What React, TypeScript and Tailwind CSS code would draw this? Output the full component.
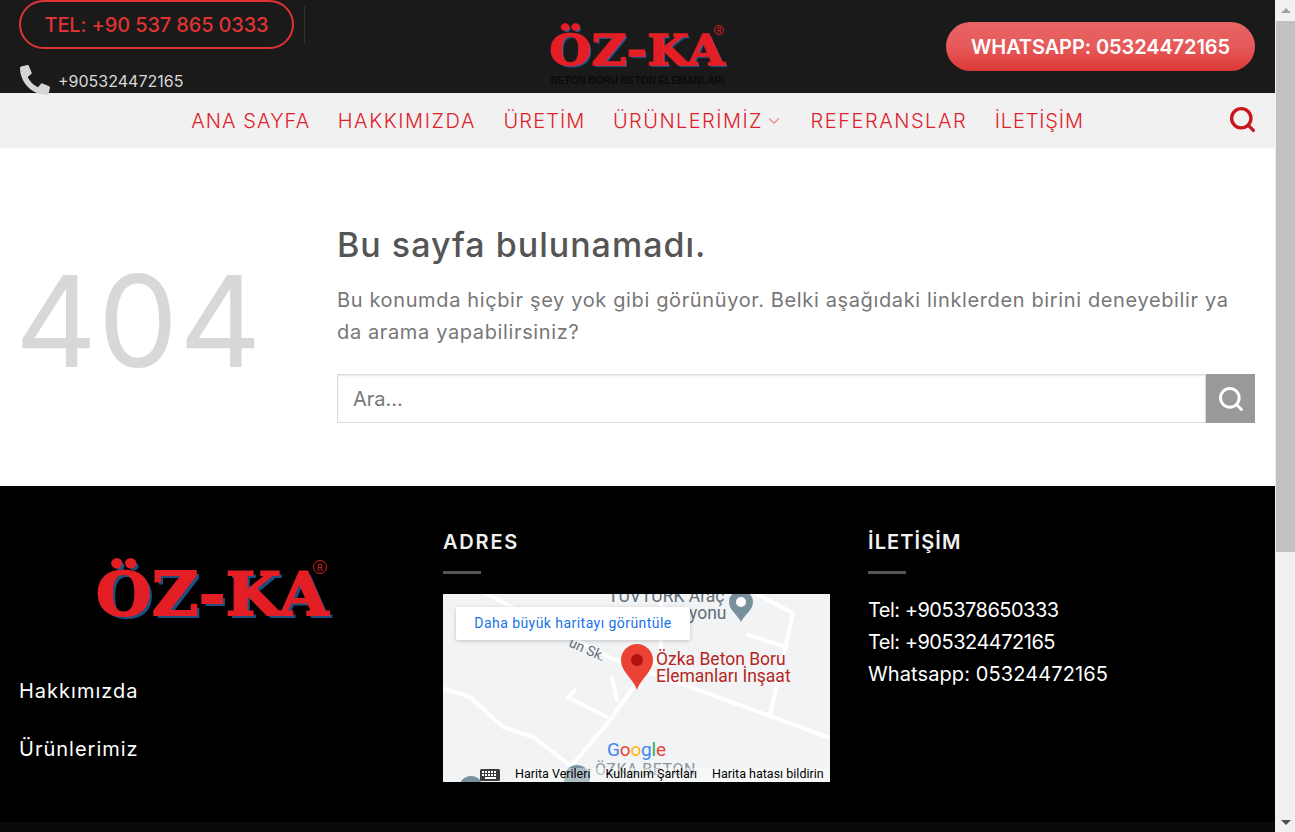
import { ChevronDown, Search } from 'lucide-react'
import { FaPhoneAlt } from 'react-icons/fa'

const navItems = [
  { label: 'ANA SAYFA', tracking: 'tracking-[1.1px]' },
  { label: 'HAKKIMIZDA', tracking: 'tracking-[1.6px]' },
  { label: 'ÜRETİM', tracking: 'tracking-[1.1px]' },
  { label: 'ÜRÜNLERİMİZ', tracking: 'tracking-[1.45px]', caret: true },
  { label: 'REFERANSLAR', tracking: 'tracking-[1.55px]' },
  { label: 'İLETİŞİM', tracking: 'tracking-[0.85px]' },
]

function HeaderLogo() {
  return (
    <div className="relative flex w-[178px] flex-col items-center">
      <span className="scale-x-[1.11] [font-family:'DejaVu_Serif',serif] text-[43px] font-bold leading-[52px] tracking-[0.5px] text-[#e31e24] [-webkit-text-stroke:1.5px_#e31e24] [text-shadow:2px_2px_0_#1d4f80]">
        ÖZ-KA
      </span>
      <span className="-mt-[3px] scale-x-[0.875] whitespace-nowrap [font-family:'Liberation_Sans',sans-serif] text-[11.5px] font-bold leading-[14px] text-[#0b0b0b]">
        BETON BORU BETON ELEMANLARI
      </span>
      <span className="absolute right-[2px] top-[1px] flex h-[10px] w-[10px] items-center justify-center rounded-full border border-[#e31e24] text-[7px] leading-none text-[#e31e24]">
        R
      </span>
    </div>
  )
}

function FooterLogo() {
  return (
    <div className="relative w-[237px]">
      <span className="block scale-x-[1.06] text-center [font-family:'DejaVu_Serif',serif] text-[60px] font-bold leading-[72px] tracking-[0.5px] text-[#e31e24] [-webkit-text-stroke:2px_#e31e24] [text-shadow:3px_3px_0_#1d4f80]">
        ÖZ-KA
      </span>
      <span className="absolute right-[4px] top-[2px] flex h-[14px] w-[14px] items-center justify-center rounded-full border border-[#e31e24] text-[9px] leading-none text-[#e31e24]">
        R
      </span>
    </div>
  )
}

function MapEmbed() {
  return (
    <div className="relative h-[188px] w-[387px] overflow-hidden bg-[#f1f3f4] [font-family:Roboto,sans-serif]">
      <svg viewBox="0 0 387 188" className="block h-[188px] w-[387px]">
        <g fill="none" stroke="#ffffff" strokeWidth="4" strokeLinejoin="round" strokeLinecap="round">
          <path d="M40 -2 L170 65 L387 144" />
          <path d="M218 -2 L218 62 L193 90 L164 130 L128 172" />
          <path d="M169 84 L174 106" />
          <path d="M132 96 L125 103 L164 123" />
          <path d="M-2 94 L27 103 L60 133 L90 143 L128 172" />
          <path d="M310 -2 L350 19 L327 121" />
          <path d="M305 41 L344 53" />
        </g>
        <g fill="#5f6d78" fontSize="17.5">
          <text x="165" y="8">TÜVTÜRK Araç</text>
          <text x="246" y="25">yonu</text>
          <text x="125" y="52" fontSize="14" transform="rotate(24 125 52)">un Sk.</text>
        </g>
        <path d="M298 28 C294 20 286 16 286 8 A12 12 0 0 1 310 8 C310 16 302 20 298 28 Z" fill="#78909c" />
        <circle cx="298" cy="8" r="5" fill="#ffffff" />
        <path d="M194 96 C190 84 178 78 178 66 A16 16 0 0 1 210 66 C210 78 198 84 194 96 Z" fill="#ea4335" />
        <circle cx="194" cy="66" r="6" fill="#b31412" />
        <g fill="#b3261e" fontSize="17.5" stroke="#ffffff" strokeWidth="0.4" paintOrder="stroke">
          <text x="213" y="71">Özka Beton Boru</text>
          <text x="213" y="88">Elemanları İnşaat</text>
        </g>
        <circle cx="134" cy="184" r="13" fill="#78909c" />
        <circle cx="28" cy="194" r="12" fill="#78909c" />
        <text x="152" y="181" fill="#8a96a0" fontSize="16" letterSpacing="0.5">ÖZKA BETON</text>
        <text x="164" y="162" fontSize="19" letterSpacing="-0.2">
          <tspan fill="#4285f4">G</tspan>
          <tspan fill="#ea4335">o</tspan>
          <tspan fill="#fbbc05">o</tspan>
          <tspan fill="#4285f4">g</tspan>
          <tspan fill="#34a853">l</tspan>
          <tspan fill="#ea4335">e</tspan>
        </text>
        <g fill="#3c3c3c">
          <rect x="37" y="175" width="20" height="12" rx="1.5" />
        </g>
        <g fill="#ffffff">
          <rect x="39" y="177" width="2" height="2" />
          <rect x="42" y="177" width="2" height="2" />
          <rect x="45" y="177" width="2" height="2" />
          <rect x="48" y="177" width="2" height="2" />
          <rect x="51" y="177" width="2" height="2" />
          <rect x="39" y="180" width="2" height="2" />
          <rect x="42" y="180" width="2" height="2" />
          <rect x="45" y="180" width="2" height="2" />
          <rect x="48" y="180" width="2" height="2" />
          <rect x="51" y="180" width="2" height="2" />
          <rect x="42" y="183" width="11" height="2" />
        </g>
      </svg>

      <div className="absolute left-[13px] top-[13px] flex h-[33px] w-[234px] items-center justify-center rounded-[2px] bg-white text-[14px] tracking-[0.45px] text-[#1a73e8] shadow-[0_1px_4px_rgba(0,0,0,0.2)]">
        Daha büyük haritayı görüntüle
      </div>

      <div className="absolute bottom-0 left-[72px] right-0 flex h-[14px] items-center whitespace-nowrap bg-white/40 pb-[2px] text-[12.5px] leading-none text-black">
        <span>Harita Verileri</span>
        <span className="ml-[15px]">Kullanım Şartları</span>
        <span className="ml-[15px]">Harita hatası bildirin</span>
      </div>
    </div>
  )
}

export default function App() {
  return (
    <div className="flex h-[832px] w-[1295px] overflow-hidden bg-white [font-family:Inter,sans-serif]">
      <div className="flex w-[1275px] shrink-0 flex-col">
        {/* Top bar */}
        <header className="flex h-[93px] shrink-0 items-start bg-[#1a1a1a] pl-[19px] pr-[20px]">
          <div className="flex-1">
            <div className="flex items-center">
              <a className="flex h-[49px] w-[275px] items-center justify-center rounded-full border-2 border-[#df3333] text-[20px] font-medium tracking-[-0.15px] text-[#df3333]">
                TEL: +90 537 865 0333
              </a>
              <span className="ml-[10px] h-[37px] w-px bg-[#333333]" />
            </div>
            <div className="relative z-10 mt-[16px] flex items-start">
              <FaPhoneAlt className="h-[30px] w-[32px] text-[#d6d6d6]" />
              <span className="ml-[7px] mt-[6px] text-[16px] leading-[20px] text-[#d8d8d8]">+905324472165</span>
            </div>
          </div>
          <div className="pt-[24px]">
            <HeaderLogo />
          </div>
          <div className="flex flex-1 justify-end pt-[22px]">
            <a className="flex h-[49px] w-[309px] items-center justify-center rounded-full bg-gradient-to-b from-[#e86464] via-[#e65a5a] to-[#dc3636] text-[20px] font-semibold tracking-[-0.1px] text-white">
              WHATSAPP: 05324472165
            </a>
          </div>
        </header>

        {/* Nav */}
        <nav className="relative flex h-[55px] shrink-0 items-center justify-center gap-[27.5px] bg-[#f1f1f1] text-[20px] font-light text-[#e0202a]">
          {navItems.map((item) => (
            <a key={item.label} className={`flex items-center whitespace-nowrap ${item.tracking}`}>
              {item.label}
              {item.caret && <ChevronDown className="ml-[2px] h-[18px] w-[18px] text-[#e88a8f]" strokeWidth={1.5} />}
            </a>
          ))}
          <Search className="absolute right-[18px] top-[12px] h-[29px] w-[29px] text-[#c8161d]" strokeWidth={2.75} />
        </nav>

        {/* 404 */}
        <main className="flex h-[338px] shrink-0 items-start px-[20px] pt-[76px]">
          <div className="-ml-[5px] w-[322px] shrink-0 pt-[22px] text-[127px] leading-[150px] tracking-[1px] text-[#d8d8d8]">404</div>
          <div className="flex-1">
            <h1 className="text-[34px] font-medium leading-[42px] tracking-[1px] text-[#555555]">Bu sayfa bulunamadı.</h1>
            <p className="mt-[18px] max-w-[900px] text-[20px] leading-[32px] tracking-[0.63px] text-[#777777]">
              Bu konumda hiçbir şey yok gibi görünüyor. Belki aşağıdaki linklerden birini deneyebilir ya da arama yapabilirsiniz?
            </p>
            <form className="mt-[26px] flex h-[49px]">
              <div className="flex flex-1 items-center border border-[#dddddd] bg-white pl-[15px] text-[20px] text-[#777777] shadow-[inset_0_1px_2px_rgba(0,0,0,0.1)]">
                Ara...
              </div>
              <button type="button" className="flex h-[49px] w-[49px] items-center justify-center bg-[#999999] text-white">
                <Search className="h-[28px] w-[28px]" strokeWidth={2.5} />
              </button>
            </form>
          </div>
        </main>

        {/* Footer */}
        <footer className="flex h-[336px] shrink-0 bg-black pl-[19px] text-white">
          <div className="w-[424px] shrink-0 pt-[72px]">
            <div className="flex w-[387px] justify-center">
              <FooterLogo />
            </div>
            <p className="mt-[46px] text-[20px] leading-[30px] tracking-[1px]">Hakkımızda</p>
            <p className="mt-[28px] text-[20px] leading-[30px] tracking-[1px]">Ürünlerimiz</p>
          </div>
          <div className="w-[425px] shrink-0 pt-[41px]">
            <h3 className="text-[20px] font-semibold leading-[30px] tracking-[1.8px] text-[#f1f1f1]">ADRES</h3>
            <div className="mt-[14px] h-[3px] w-[38px] bg-[#555555]" />
            <div className="mt-[20px]">
              <MapEmbed />
            </div>
          </div>
          <div className="pt-[41px]">
            <h3 className="text-[20px] font-semibold leading-[30px] tracking-[1.1px] text-[#f1f1f1]">İLETİŞİM</h3>
            <div className="mt-[14px] h-[3px] w-[38px] bg-[#555555]" />
            <div className="mt-[20px] text-[20px] leading-[32px]">
              <p className="tracking-[-0.5px]">Tel: +905378650333</p>
              <p className="tracking-[-0.5px]">Tel: +905324472165</p>
              <p className="tracking-[0.1px]">Whatsapp: 05324472165</p>
            </div>
          </div>
        </footer>
        <div className="h-[10px] shrink-0 bg-[#0a0a0a]" />
      </div>

      {/* Scrollbar */}
      <div className="flex w-[20px] shrink-0 flex-col items-center bg-[#f1f1f1] pl-[1px]">
        <div className="flex h-[21px] items-center justify-center">
          <span className="h-0 w-0 border-x-[5px] border-b-[5px] border-x-transparent border-b-[#a3a3a3]" />
        </div>
        <div className="h-[531px] w-[19px] bg-[#c1c1c1]" />
        <div className="flex flex-1 items-end justify-center pb-[7px]">
          <span className="h-0 w-0 border-x-[5px] border-t-[5px] border-x-transparent border-t-[#505050]" />
        </div>
      </div>
    </div>
  )
}
